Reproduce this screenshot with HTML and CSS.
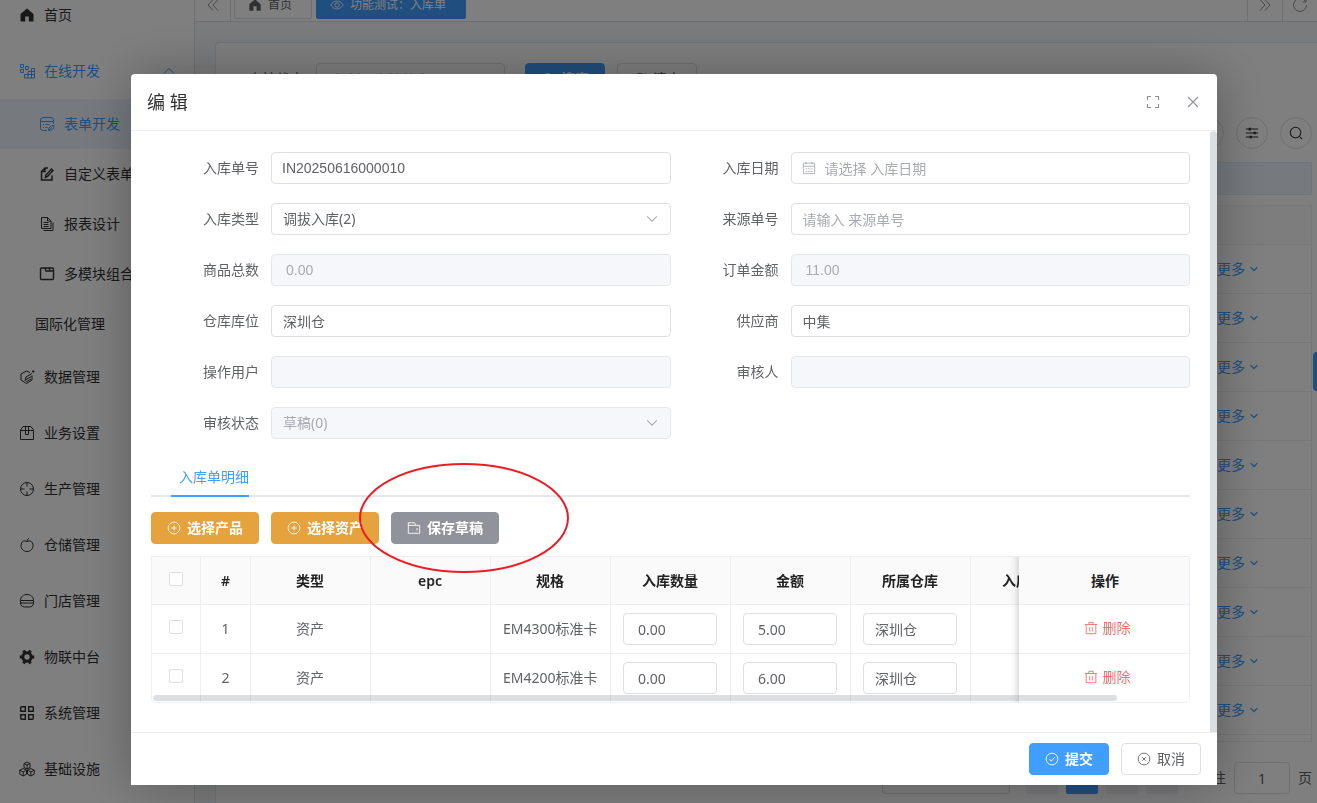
FILE: index.html
```html
<!DOCTYPE html>
<html lang="zh-CN">
<head>
  <meta charset="UTF-8" />
  <meta name="viewport" content="width=device-width, initial-scale=1" />
  <title>功能测试：入库单</title>
  <link rel="stylesheet" href="styles.css">
</head>
<body>
  <!-- icon sprite -->
  <svg class="sprite" aria-hidden="true">
    <symbol id="i-home" viewBox="0 0 16 16"><path fill="currentColor" stroke="none" d="M8 1.5 1.5 7v7.5h4.7v-5h3.6v5h4.7V7z"/></symbol>
    <symbol id="i-grid" viewBox="0 0 16 16"><path d="M1.5 1.5h3v3h-3zM6.5 3.5h3v3h-3zM1.5 6.5h3v3h-3zM5.5 11.5h10M5.5 15h10V5.500h-3v9.500M5.500 15v-3.500M9 15V8.500h6.500"/></symbol>
    <symbol id="i-form" viewBox="0 0 16 16"><path d="M8 14.5H4A2.5 2.5 0 0 1 1.5 12V4A2.5 2.5 0 0 1 4 1.5h8A2.5 2.5 0 0 1 14.5 4v4M1.5 5.500h13M4 8.500h1M6.500 8.500h4M4 11.500h1M6.500 11.500h2M9.500 14.500c0-3 2-5 5.500-5 0 3.500-2 5-5.500 5l3-3"/></symbol>
    <symbol id="i-edit" viewBox="0 0 16 16"><path stroke-width="1.5" d="M9 2H6L2.500 5.500V14H13V9.500M6 2v3.500H2.500M6.500 11.500 7 9l5.500-6L14 4.500l-5.500 6z"/></symbol>
    <symbol id="i-docs" viewBox="0 0 16 16"><path d="M2.500 1.500h6L12 5v7.500H2.500zM8.500 1.500V5H12M4.500 6.500h5M4.500 8.500h5M4.500 10.500h5M4.500 14.500H14v-8"/></symbol>
    <symbol id="i-blocks" viewBox="0 0 16 16"><path stroke-width="1.4" d="M2.500 2h11a1 1 0 0 1 1 1v9.500a1 1 0 0 1-1 1h-11a1 1 0 0 1-1-1V3a1 1 0 0 1 1-1zM6 2l1 3h7.500M10 2l1 3"/></symbol>
    <symbol id="i-data" viewBox="0 0 16 16"><path d="M11 3.500 7.500 2 2 5v6l5.500 3.500L13 11V6.500M6 12l1-4 6-3.500M7 10.500l5.500-3M7 13l5-3M13 2.500h2.500M14.200 1.200v2.600"/></symbol>
    <symbol id="i-box" viewBox="0 0 16 16"><path d="M1.500 5 4 1.500h8L14.500 5v9.500h-13zM1.500 5.500h13M6.500 1.500v8h3v-8"/></symbol>
    <symbol id="i-aim" viewBox="0 0 16 16"><circle cx="8" cy="8" r="6.5"/><path d="M8 1.500v4M8 10.500v4M1.500 8h4M10.500 8h4"/></symbol>
    <symbol id="i-apple" viewBox="0 0 16 16"><path d="M8 4.500C5 3 2 4.500 2 8.500c0 3.500 2.500 6 6 6s6-2.500 6-6c0-4-3-5.500-6-4zM8 4.500c0-1.500.5-2.500 2-3"/></symbol>
    <symbol id="i-burger" viewBox="0 0 16 16"><path d="M1.500 7.500c0-8 13-8 13 0zM1.500 7.500V10h13V7.500M1.500 10c0 2.500 2 4 4 4h5c2 0 4-1.500 4-4"/></symbol>
    <symbol id="i-gear" viewBox="0 0 16 16"><circle cx="8" cy="8" r="4.200" stroke-width="3"/><path stroke-width="3" d="M4.500 1.500 6 4M11.500 1.500 10 4M4.500 14.500 6 12M11.500 14.500 10 12M.8 8H3M13 8h2.200"/></symbol>
    <symbol id="i-menu" viewBox="0 0 16 16"><path stroke-width="1.4" d="M2.500 1.700h3.800v4.600H1.700V2.500zM9.700 1.700h3.800l.8.8v3.800H9.700zM1.700 9.700h4.600v4.600H2.500l-.8-.8zM9.700 9.700h4.600v3.800l-.8.8H9.700z"/></symbol>
    <symbol id="i-cubes" viewBox="0 0 16 16"><path d="M8 1 11 2.500v4L8 8 5 6.500v-4zM5 2.500 8 4l3-1.500M8 4v4M4.200 7.500l3.300 1.700v4L4.200 15 .8 13.200v-4zM.8 9.200l3.400 1.700 3.300-1.700M4.200 11v4M11.800 7.500l3.400 1.700v4L11.800 15l-3.300-1.800v-4zM8.500 9.200l3.300 1.700 3.400-1.700M11.800 11v4"/></symbol>
    <symbol id="i-up" viewBox="0 0 16 16"><path d="M3 10.500 8 5.500l5 5"/></symbol>
    <symbol id="i-down" viewBox="0 0 16 16"><path d="m2.500 5 5.500 5.500L13.500 5"/></symbol>
    <symbol id="i-dleft" viewBox="0 0 16 16"><path d="M8 2.500 3 8l5 5.500M13 2.500 8 8l5 5.500"/></symbol>
    <symbol id="i-dright" viewBox="0 0 16 16"><path d="M3 2.500 8 8l-5 5.500M8 2.500 13 8l-5 5.500"/></symbol>
    <symbol id="i-refresh" viewBox="0 0 16 16"><path d="M13.500 4.500A6.500 6.500 0 1 0 14.500 8M14 1.500V5h-3.500"/></symbol>
    <symbol id="i-eye" viewBox="0 0 16 16"><path d="M1 8c3.500-6 10.500-6 14 0-3.500 6-10.500 6-14 0z"/><circle cx="8" cy="8" r="2.500"/></symbol>
    <symbol id="i-search" viewBox="0 0 16 16"><circle cx="7.500" cy="7.500" r="6"/><path d="m12 12 3 3"/></symbol>
    <symbol id="i-sliders" viewBox="0 0 16 16"><path d="M1 3.500h14M1 8h14M1 12.500h14"/><path stroke-width="2.500" d="M5.500 2v3M11 6.500v3M6.500 11v3"/></symbol>
    <symbol id="i-full" viewBox="0 0 16 16"><path stroke-width="1.200" d="M2.500 6V2.500H6M10 2.500h3.500V6M13.500 10v3.500H10M6 13.500H2.500V10"/></symbol>
    <symbol id="i-close" viewBox="0 0 16 16"><path stroke-width="1.200" d="m3 3 10 10M13 3 3 13"/></symbol>
    <symbol id="i-calendar" viewBox="0 0 16 16"><path d="M1.500 2.500h13v12h-13zM1.500 6h13M4.500 1v3M11.500 1v3M4 9h2M7 9h2M10 9h2M4 12h2M7 12h2M10 12h2"/></symbol>
    <symbol id="i-plus" viewBox="0 0 16 16"><circle cx="8" cy="8" r="6.700"/><path d="M8 5v6M5 8h6"/></symbol>
    <symbol id="i-folder" viewBox="0 0 16 16"><path d="M1.500 14V2h7L10 5h4.500v9zM1.500 5H10M11.500 8v3"/></symbol>
    <symbol id="i-trash" viewBox="0 0 16 16"><path d="M1 4h14M5.500 4V1.500h5V4M2.500 4v10.500h11V4M6.500 7v5M9.500 7v5"/></symbol>
    <symbol id="i-check" viewBox="0 0 16 16"><circle cx="8" cy="8" r="6.700"/><path d="m5 8 2.200 2.500L11.200 6"/></symbol>
    <symbol id="i-cancel" viewBox="0 0 16 16"><circle cx="8" cy="8" r="6.700"/><path d="m6 6 4 4M10 6l-4 4"/></symbol>
  </svg>

  <div class="app">
    <aside class="sidebar">
      <nav class="menu">
        <a href="#" class="menu-item"><svg class="icon"><use href="#i-home"/></svg>首页</a>
        <a href="#" class="menu-item open"><svg class="icon"><use href="#i-grid"/></svg>在线开发<svg class="icon arrow"><use href="#i-up"/></svg></a>
        <a href="#" class="menu-item sub active"><svg class="icon"><use href="#i-form"/></svg>表单开发</a>
        <a href="#" class="menu-item sub"><svg class="icon"><use href="#i-edit"/></svg>自定义表单</a>
        <a href="#" class="menu-item sub"><svg class="icon"><use href="#i-docs"/></svg>报表设计</a>
        <a href="#" class="menu-item sub"><svg class="icon"><use href="#i-blocks"/></svg>多模块组合</a>
        <a href="#" class="menu-item sub no-icon">国际化管理</a>
        <a href="#" class="menu-item"><svg class="icon"><use href="#i-data"/></svg>数据管理</a>
        <a href="#" class="menu-item"><svg class="icon"><use href="#i-box"/></svg>业务设置</a>
        <a href="#" class="menu-item"><svg class="icon"><use href="#i-aim"/></svg>生产管理</a>
        <a href="#" class="menu-item"><svg class="icon"><use href="#i-apple"/></svg>仓储管理</a>
        <a href="#" class="menu-item"><svg class="icon"><use href="#i-burger"/></svg>门店管理</a>
        <a href="#" class="menu-item"><svg class="icon"><use href="#i-gear"/></svg>物联中台</a>
        <a href="#" class="menu-item"><svg class="icon"><use href="#i-menu"/></svg>系统管理</a>
        <a href="#" class="menu-item"><svg class="icon"><use href="#i-cubes"/></svg>基础设施</a>
      </nav>
    </aside>

    <main class="main">
      <div class="tags">
        <button class="tags-btn" aria-label="向左"><svg class="icon"><use href="#i-dleft"/></svg></button>
        <div class="tags-list">
          <a href="#" class="tag"><svg class="icon"><use href="#i-home"/></svg>首页</a>
          <a href="#" class="tag current"><svg class="icon"><use href="#i-eye"/></svg>功能测试：入库单</a>
        </div>
        <button class="tags-btn right" aria-label="向右"><svg class="icon"><use href="#i-dright"/></svg></button>
        <button class="tags-btn right" aria-label="刷新"><svg class="icon"><use href="#i-refresh"/></svg></button>
      </div>

      <section class="card">
        <div class="search">
          <label for="q-status">审核状态</label>
          <input id="q-status" class="input" placeholder="请选择 审核状态">
          <button class="btn primary"><svg class="icon"><use href="#i-search"/></svg>搜索</button>
          <button class="btn"><svg class="icon"><use href="#i-refresh"/></svg>清空</button>
        </div>
        <div class="toolbar">
          <button class="round" aria-label="刷新"><svg class="icon"><use href="#i-refresh"/></svg></button>
          <button class="round" aria-label="列设置"><svg class="icon"><use href="#i-sliders"/></svg></button>
          <button class="round" aria-label="搜索"><svg class="icon"><use href="#i-search"/></svg></button>
        </div>
        <div class="tip"></div>
        <div class="list-wrap">
          <table class="list">
            <thead><tr><th></th></tr></thead>
            <tbody>
              <tr><td><a href="#">更多<svg class="icon"><use href="#i-down"/></svg></a></td></tr>
              <tr><td><a href="#">更多<svg class="icon"><use href="#i-down"/></svg></a></td></tr>
              <tr><td><a href="#">更多<svg class="icon"><use href="#i-down"/></svg></a></td></tr>
              <tr><td><a href="#">更多<svg class="icon"><use href="#i-down"/></svg></a></td></tr>
              <tr><td><a href="#">更多<svg class="icon"><use href="#i-down"/></svg></a></td></tr>
              <tr><td><a href="#">更多<svg class="icon"><use href="#i-down"/></svg></a></td></tr>
              <tr><td><a href="#">更多<svg class="icon"><use href="#i-down"/></svg></a></td></tr>
              <tr><td><a href="#">更多<svg class="icon"><use href="#i-down"/></svg></a></td></tr>
              <tr><td><a href="#">更多<svg class="icon"><use href="#i-down"/></svg></a></td></tr>
              <tr><td><a href="#">更多<svg class="icon"><use href="#i-down"/></svg></a></td></tr>
            </tbody>
          </table>
        </div>
        <div class="pager">
          <div class="page-size"></div>
          <button class="page" aria-label="上一页"></button>
          <button class="page current" aria-label="第一页"></button>
          <button class="page" aria-label="第二页"></button>
          <button class="page" aria-label="下一页"></button>
          <label for="jump">前往</label>
          <input id="jump" class="input" value="1">
          <span>页</span>
        </div>
      </section>
    </main>
  </div>
  <div class="side-handle"></div>

  <div class="overlay">
    <div class="dialog" role="dialog" aria-labelledby="dlg-title">
      <header class="dialog-header">
        <h2 id="dlg-title">编 辑</h2>
        <button aria-label="全屏"><svg class="icon"><use href="#i-full"/></svg></button>
        <button aria-label="关闭"><svg class="icon"><use href="#i-close"/></svg></button>
      </header>

      <div class="dialog-body">
        <div class="dialog-content">
          <form class="form">
            <div class="field">
              <label for="f-no">入库单号</label>
              <input id="f-no" class="input latin" value="IN20250616000010">
            </div>
            <div class="field">
              <label for="f-date">入库日期</label>
              <div class="control">
                <svg class="icon prefix"><use href="#i-calendar"/></svg>
                <input id="f-date" class="input has-prefix" placeholder="请选择 入库日期">
              </div>
            </div>
            <div class="field">
              <label for="f-type">入库类型</label>
              <div class="control">
                <select id="f-type" class="input"><option>调拔入库(2)</option></select>
                <svg class="icon suffix"><use href="#i-down"/></svg>
              </div>
            </div>
            <div class="field">
              <label for="f-source">来源单号</label>
              <input id="f-source" class="input" placeholder="请输入 来源单号">
            </div>
            <div class="field">
              <label for="f-count">商品总数</label>
              <input id="f-count" class="input latin number" value="0.00" disabled>
            </div>
            <div class="field">
              <label for="f-amount">订单金额</label>
              <input id="f-amount" class="input latin number" value="11.00" disabled>
            </div>
            <div class="field">
              <label for="f-store">仓库库位</label>
              <input id="f-store" class="input" value="深圳仓">
            </div>
            <div class="field">
              <label for="f-supplier">供应商</label>
              <input id="f-supplier" class="input" value="中集">
            </div>
            <div class="field">
              <label for="f-user">操作用户</label>
              <input id="f-user" class="input" disabled>
            </div>
            <div class="field">
              <label for="f-auditor">审核人</label>
              <input id="f-auditor" class="input" disabled>
            </div>
            <div class="field">
              <label for="f-status">审核状态</label>
              <div class="control">
                <select id="f-status" class="input" disabled><option>草稿(0)</option></select>
                <svg class="icon suffix"><use href="#i-down"/></svg>
              </div>
            </div>
          </form>

          <div class="tabs">
            <a href="#" class="tab">入库单明细</a>
          </div>

          <div class="actions">
            <button class="btn warning"><svg class="icon"><use href="#i-plus"/></svg>选择产品</button>
            <button class="btn warning"><svg class="icon"><use href="#i-plus"/></svg>选择资产</button>
            <button class="btn info"><svg class="icon"><use href="#i-folder"/></svg>保存草稿</button>
            <svg class="mark" viewBox="0 0 212 112"><ellipse cx="106" cy="56" rx="104" ry="54"/></svg>
          </div>

          <div class="detail-wrap">
            <table class="detail">
              <colgroup>
                <col class="col-check"><col class="col-index"><col><col><col><col><col><col><col><col class="col-action">
              </colgroup>
              <thead>
                <tr>
                  <th><input type="checkbox" aria-label="全选"></th>
                  <th>#</th>
                  <th>类型</th>
                  <th>epc</th>
                  <th>规格</th>
                  <th>入库数量</th>
                  <th>金额</th>
                  <th>所属仓库</th>
                  <th>入库时间</th>
                  <th class="fixed">操作</th>
                </tr>
              </thead>
              <tbody>
                <tr>
                  <td><input type="checkbox" aria-label="选择第1行"></td>
                  <td>1</td>
                  <td>资产</td>
                  <td></td>
                  <td>EM4300标准卡</td>
                  <td><input class="input number" value="0.00" aria-label="入库数量"></td>
                  <td><input class="input number" value="5.00" aria-label="金额"></td>
                  <td><input class="input" value="深圳仓" aria-label="所属仓库"></td>
                  <td></td>
                  <td class="fixed"><button class="link danger"><svg class="icon"><use href="#i-trash"/></svg>删除</button></td>
                </tr>
                <tr>
                  <td><input type="checkbox" aria-label="选择第2行"></td>
                  <td>2</td>
                  <td>资产</td>
                  <td></td>
                  <td>EM4200标准卡</td>
                  <td><input class="input number" value="0.00" aria-label="入库数量"></td>
                  <td><input class="input number" value="6.00" aria-label="金额"></td>
                  <td><input class="input" value="深圳仓" aria-label="所属仓库"></td>
                  <td></td>
                  <td class="fixed"><button class="link danger"><svg class="icon"><use href="#i-trash"/></svg>删除</button></td>
                </tr>
              </tbody>
            </table>
            <div class="h-thumb"></div>
          </div>
        </div>
        <div class="v-thumb"></div>
      </div>

      <footer class="dialog-footer">
        <button class="btn primary"><svg class="icon"><use href="#i-check"/></svg>提交</button>
        <button class="btn"><svg class="icon"><use href="#i-cancel"/></svg>取消</button>
      </footer>
    </div>
  </div>
</body>
</html>
```
FILE: styles.css
```css
:root {
  --primary: #409eff;
  --warning: #e6a23c;
  --info: #909399;
  --danger: #f56c6c;
  --text: #303133;
  --text-regular: #606266;
  --placeholder: #a8abb2;
  --border: #dcdfe6;
  --border-light: #e4e7ed;
  --border-table: #ebeef5;
  --font: "Noto Sans", "Noto Sans CJK SC", sans-serif;
}

* { box-sizing: border-box; }

body {
  margin: 0;
  height: 100vh;
  overflow: hidden;
  font-family: var(--font);
  font-size: 14px;
  line-height: 20px;
  color: var(--text-regular);
}

a { color: inherit; text-decoration: none; }

button, input, select {
  font: inherit;
  color: inherit;
}

button {
  padding: 0;
  border: none;
  background: none;
  cursor: pointer;
}

.sprite { display: none; }

.icon {
  flex: none;
  width: 16px;
  height: 16px;
  fill: none;
  stroke: currentColor;
}

/* app shell */
.app {
  display: flex;
  height: 100vh;
}

.sidebar {
  flex: none;
  width: 195px;
  overflow: hidden;
  border-right: 1px solid var(--border);
}

/* the menu is scrolled a little */
.menu { margin-top: -13px; }

.menu-item {
  display: flex;
  align-items: center;
  gap: 9px;
  height: 56px;
  padding: 0 17px 0 19px;
  color: var(--text);
  white-space: nowrap;
}

.menu-item.open { color: var(--primary); }
.menu-item .arrow { margin-left: auto; }

.menu-item.sub {
  height: 50px;
  padding-left: 39px;
}

.menu-item.active {
  color: var(--primary);
  background: #ecf5ff;
}

.menu-item.no-icon { padding-left: 35px; }

.main {
  flex: 1;
  min-width: 0;
  display: flex;
  flex-direction: column;
  background: #f5f7f9;
}

.tags {
  flex: none;
  display: flex;
  align-items: flex-end;
  height: 22px;
  overflow: hidden;
  background: #fff;
  border-bottom: 1px solid var(--border);
}

.tags-btn {
  display: flex;
  align-items: center;
  justify-content: center;
  width: 36px;
  height: 32px;
  border-right: 1px solid var(--border);
  color: var(--info);
}

.tags-btn.right {
  width: 35px;
  border-right: none;
  border-left: 1px solid var(--border);
}

.tags-list {
  flex: 1;
  display: flex;
  gap: 4px;
  padding: 0 3px 2px;
}

.tag {
  display: flex;
  align-items: center;
  gap: 6px;
  height: 28px;
  padding: 0 19px 0 13px;
  border: 1px solid var(--border);
  border-radius: 2px;
  font-size: 12px;
}

.tag .icon { width: 14px; height: 14px; }

.tag.current {
  color: #fff;
  background: var(--primary);
  border-color: var(--primary);
}

.card {
  flex: 1 0 auto;
  margin: 20px 0 0 20px;
  padding: 20px 5px 20px 20px;
  background: #fff;
  border: 1px solid var(--border-light);
  border-right: none;
  border-radius: 4px 0 0 4px;
}

.search {
  display: flex;
  align-items: center;
}

.search label {
  width: 80px;
  padding-right: 12px;
  text-align: right;
}

.search .input { width: 189px; margin-right: 20px; }
.search .btn + .btn { margin-left: 12px; }

.toolbar {
  display: flex;
  justify-content: flex-end;
  gap: 12px;
  margin-top: 22px;
}

.round {
  display: flex;
  align-items: center;
  justify-content: center;
  width: 32px;
  height: 32px;
  border: 1px solid var(--border);
  border-radius: 50%;
  color: var(--text);
}

.round .icon { width: 14px; height: 14px; stroke-width: 1.2; }

.tip {
  height: 33px;
  margin: 13px 0 10px;
  background: #ecf5ff;
  border: 1px solid #d9ecff;
}

.list-wrap {
  padding-bottom: 6px;
  border: 1px solid var(--border-table);
  border-top: none;
}

.list {
  width: 100%;
  border-collapse: separate;
  border-spacing: 0;
}

.list th {
  height: 40px;
  background: #fafafa;
  border-top: 1px solid var(--border-table);
  border-bottom: 1px solid var(--border-table);
}

.list td {
  height: 49px;
  padding: 0 52px 0 0;
  border-bottom: 1px solid var(--border-table);
}

.list a {
  display: flex;
  align-items: center;
  justify-content: flex-end;
  gap: 4px;
  color: var(--primary);
}

.list .icon { width: 10px; height: 10px; stroke-width: 2; }

.pager {
  display: flex;
  align-items: center;
  justify-content: flex-end;
  gap: 8px;
  margin-top: 20px;
}

.page-size {
  width: 128px;
  height: 32px;
  margin-right: 8px;
  border: 1px solid var(--border);
  border-radius: 4px;
}

.page {
  width: 32px;
  height: 32px;
  border-radius: 2px;
  background: #f0f2f5;
}

.page.current { background: var(--primary); }

.pager label { margin-left: 12px; }

.pager .input {
  width: 56px;
  text-align: center;
}

.side-handle {
  position: fixed;
  top: 352px;
  right: 0;
  width: 4px;
  height: 39px;
  background: var(--primary);
  border-radius: 4px 0 0 4px;
}

/* controls */
.input {
  width: 100%;
  height: 32px;
  padding: 0 11px;
  background: #fff;
  border: 1px solid var(--border);
  border-radius: 4px;
  color: var(--text-regular);
  outline: none;
}

.input::placeholder { color: var(--placeholder); }

.input:disabled {
  background: #f5f7fa;
  border-color: var(--border-light);
  color: var(--placeholder);
  opacity: 1;
}

select.input { appearance: none; }

.input.latin { padding: 0 10px; font-family: "Liberation Sans", sans-serif; }
.input.number { padding: 0 14px; }
.input.has-prefix { padding-left: 33px; }

.control {
  position: relative;
  width: 100%;
}

.prefix, .suffix {
  position: absolute;
  top: 9px;
  width: 14px;
  height: 14px;
  color: var(--placeholder);
}

.prefix { left: 11px; }
.suffix { right: 12px; stroke-width: 1.2; }

.btn {
  display: inline-flex;
  align-items: center;
  justify-content: center;
  gap: 6px;
  height: 32px;
  padding: 0 15px;
  border: 1px solid var(--border);
  border-radius: 4px;
  background: #fff;
  white-space: nowrap;
}

.btn .icon { width: 14px; height: 14px; }

.btn.primary, .btn.warning, .btn.info {
  color: #fff;
  font-weight: 700;
}

.btn.primary { background: var(--primary); border-color: var(--primary); }
.btn.warning { background: var(--warning); border-color: var(--warning); }
.btn.info { background: var(--info); border-color: var(--info); }

.link {
  display: inline-flex;
  align-items: center;
  gap: 5px;
}

.link .icon { width: 14px; height: 14px; }
.link.danger { color: var(--danger); }

/* dialog */
.overlay {
  position: fixed;
  inset: 0;
  padding: 74px 100px 0 131px;
  background: rgba(0, 0, 0, 0.5);
}

.dialog {
  background: #fff;
  border-radius: 4px 4px 0 0;
  box-shadow: 1px 1px 50px rgba(0, 0, 0, 0.3);
}

.dialog-header {
  display: flex;
  align-items: center;
  gap: 24px;
  height: 57px;
  padding: 0 16px;
  border-bottom: 1px solid #eee;
}

.dialog-header h2 {
  flex: 1;
  margin: 0;
  font-size: 18px;
  font-weight: 400;
  color: var(--text);
}

.dialog-header button {
  display: flex;
  color: var(--info);
}

.dialog-body { display: flex; }

.dialog-content {
  flex: 1;
  min-width: 0;
  padding: 21px 20px 29px;
}

.v-thumb {
  flex: none;
  width: 7px;
  background: #dddee0;
  border-radius: 4px 4px 0 0;
}

.form {
  display: grid;
  grid-template-columns: 1fr 1fr;
  row-gap: 19px;
}

.field {
  display: flex;
  align-items: center;
}

.field label {
  flex: none;
  width: 120px;
  padding-right: 12px;
  text-align: right;
}

.tabs {
  margin-top: 18px;
  padding-left: 20px;
  display: flex;
  box-shadow: inset 0 -2px var(--border-light);
}

.tab {
  height: 40px;
  padding-left: 8px;
  line-height: 40px;
  color: var(--primary);
  border-bottom: 2px solid var(--primary);
}

.actions {
  position: relative;
  display: flex;
  gap: 12px;
  margin: 15px 0 12px;
}

/* hand-drawn highlight over the draft button */
.mark {
  position: absolute;
  top: -50px;
  left: 207px;
  z-index: 3;
  width: 212px;
  height: 112px;
  fill: none;
  stroke: #ed1c24;
  stroke-width: 2;
  pointer-events: none;
}

.detail-wrap {
  position: relative;
  overflow: hidden;
  border: 1px solid var(--border-table);
  border-radius: 0 0 4px 4px;
}

.detail {
  width: 100%;
  min-width: 1109px;
  table-layout: fixed;
  border-collapse: separate;
  border-spacing: 0;
}

.col-check { width: 49px; }
.col-index { width: 50px; }
.col-action { width: 170px; }

.detail th, .detail td {
  height: 49px;
  padding: 0 13px 0 12px;
  text-align: center;
  white-space: nowrap;
  background: #fff;
  border-right: 1px solid var(--border-table);
  border-bottom: 1px solid var(--border-table);
}

.detail th {
  height: 48px;
  background: #fafafa;
  color: #222;
  font-weight: 600;
}

.detail tr > :last-child { border-right: none; }
.detail tbody tr:last-child td { border-bottom: none; height: 48px; }

.detail .fixed {
  position: sticky;
  right: 0;
  padding: 0 12px 0 14px;
}

.detail td.fixed { padding-left: 18px; }

/* shadow at the left of the pinned column */
.detail .fixed::before {
  content: "";
  position: absolute;
  top: 0;
  bottom: -1px;
  left: -10px;
  width: 10px;
  background: linear-gradient(to left, rgba(0, 0, 0, 0.12), rgba(0, 0, 0, 0.03) 50%, transparent);
}

.detail tbody tr:last-child .fixed::before { bottom: 0; }

.detail .input { display: block; }

.detail input[type="checkbox"] {
  appearance: none;
  display: block;
  width: 14px;
  height: 14px;
  margin: 0 auto 4px;
  background: #fff;
  border: 1px solid var(--border);
  border-radius: 2px;
}

.detail tr > :first-child, .detail tr > :nth-child(2) { padding: 0; }

.h-thumb {
  position: absolute;
  left: 1px;
  bottom: 1px;
  width: 93%;
  height: 6px;
  background: rgba(144, 147, 153, 0.3);
  border-radius: 3px;
}

.dialog-footer {
  display: flex;
  justify-content: flex-end;
  gap: 12px;
  padding: 10px 16px;
  border-top: 1px solid #eee;
}
```
